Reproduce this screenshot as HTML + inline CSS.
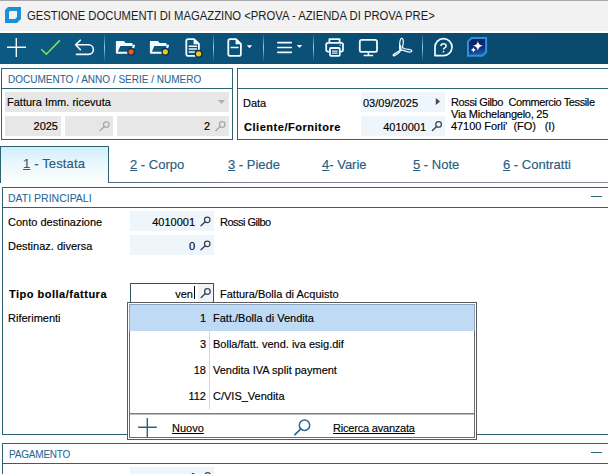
<!DOCTYPE html>
<html><head><meta charset="utf-8">
<style>
*{margin:0;padding:0;box-sizing:border-box}
html,body{width:608px;height:474px;overflow:hidden;background:#fff}
body{position:relative;font-family:"Liberation Sans",sans-serif;font-size:11px;color:#000;-webkit-text-stroke:0.15px currentColor}
.a{position:absolute}
.t{position:absolute;white-space:pre;line-height:11px;font-size:11px}
.r{text-align:right}
.bd{border:1px solid #2d6274}
.hd{color:#2a6590;font-size:10.5px;-webkit-text-stroke:0.05px currentColor}
.fg{background:#e7e7e7}
.fb{background:#eef5fb}
.tab{color:#275e81;font-size:13px;line-height:13px}
.u{text-decoration:underline;text-underline-offset:1px}
</style></head><body>
<!-- title bar -->
<div class="a" style="left:0;top:0;width:608px;height:1px;background:#a9a9a9"></div>
<div class="a" style="left:0;top:1px;width:608px;height:30px;background:#f2f2f2"></div>
<svg class="a" style="left:5px;top:7px" width="17" height="17" viewBox="0 0 17 17"><path d="M3 0H16V12L12 16H0V3Z" fill="#1a90d8"/><path d="M5 4H12V10L10 12H4V5Z" fill="#f2f2f2"/></svg>
<div class="t" style="left:27px;top:10px;font-size:12px;line-height:12px;color:#1c1c1c;-webkit-text-stroke:0;transform:scaleX(0.939);transform-origin:0 0">GESTIONE DOCUMENTI DI MAGAZZINO &lt;PROVA - AZIENDA DI PROVA PRE&gt;</div>

<!-- toolbar -->
<div class="a" style="left:0;top:33px;width:608px;height:31px;background:linear-gradient(90deg,#0c5a83,#0a4d72 60%,#094a6d)"></div>
<svg class="a" style="left:0;top:33px" width="608" height="31" viewBox="0 33 608 31">
<defs><linearGradient id="sep" x1="0" y1="0" x2="0" y2="1"><stop offset="0" stop-color="#8fd0ee" stop-opacity="0"/><stop offset=".5" stop-color="#8fd0ee"/><stop offset="1" stop-color="#8fd0ee" stop-opacity="0"/></linearGradient>
<linearGradient id="ai" x1="0.3" y1="0" x2="0.5" y2="1"><stop offset="0" stop-color="#0a1e5e"/><stop offset=".6" stop-color="#0d2d74"/><stop offset="1" stop-color="#1e64b4"/></linearGradient></defs>
<g fill="url(#sep)"><rect x="104" y="33.5" width="1" height="28"/><rect x="213" y="33.5" width="1" height="28"/><rect x="263" y="33.5" width="1" height="28"/><rect x="313" y="33.5" width="1" height="28"/><rect x="422" y="33.5" width="1" height="28"/></g>
<g fill="none" stroke="#f4fbff" stroke-width="1.4">
<path d="M7 47.3H26M16.3 38V57"/>
</g>
<path d="M41.3 49.3L46.3 54.2L59.8 40.4" fill="none" stroke="#84de5c" stroke-width="1.6"/>
<g fill="none" stroke="#f4fbff" stroke-width="1.6" stroke-linecap="round" stroke-linejoin="round">
<path d="M80.3 40.2L75.6 44.8L80.3 49.6M75.6 44.8H88.6A4.8 4.8 0 0 1 88.6 54.4H76.5"/>
</g>
<g fill="none" stroke="#f4fbff" stroke-width="1.8" stroke-linejoin="round">
<path d="M194 39.2H188.2Q186.3 39.2 186.3 41.1V53.9Q186.3 55.8 188.2 55.8H197Q198.9 55.8 198.9 53.9V44Z"/>
<path d="M236 39.2H230.2Q228.3 39.2 228.3 41.1V53.9Q228.3 55.8 230.2 55.8H239Q240.9 55.8 240.9 53.9V44Z"/>
</g>
<path d="M193.6 38.6L199.7 44.2H193.6Z M235.6 38.6L241.7 44.2H235.6Z" fill="#f4fbff"/>
<g fill="none" stroke="#eef9ff" stroke-width="1.5" stroke-linecap="round">
<path d="M189.3 46.3H196.5M189.3 49.1H196.5M189.3 52H194.5"/>
<path d="M231.2 47.5H238"/>
</g>
<g fill="none" stroke="#f4fbff" stroke-width="1.6" stroke-linecap="round">
<path d="M277.8 42.6H291.3M277.8 47.5H291.3M277.8 52.4H291.3"/>
</g>
<path d="M246.8 45.3H252.2L249.5 48.3Z M296.8 45.1H302.2L299.5 48.1Z" fill="#f4fbff"/>
<path d="M115.9 41.8Q115.9 41 116.7 41H123.9L125.6 42.9H132.4V44.7H134.4Q135.4 44.8 135 45.8L131.8 53.8H116.7Q115.9 53.8 115.9 53ZM120.3 45.9H132.8L130.2 51.8H117.9Z" fill="#f4fbff" fill-rule="evenodd"/><path d="M115.9 41.8Q115.9 41 116.7 41H123.9L125.6 42.9H132.4V44.7H134.4Q135.4 44.8 135 45.8L131.8 53.8H116.7Q115.9 53.8 115.9 53ZM120.3 45.9H132.8L130.2 51.8H117.9Z" transform="translate(34 0)" fill="#f4fbff" fill-rule="evenodd"/>
<circle cx="131.1" cy="51.8" r="4" fill="#07354f"/><circle cx="131.1" cy="51.8" r="2.6" fill="#f0581c"/>
<circle cx="165.3" cy="51.8" r="4" fill="#07354f"/><circle cx="165.3" cy="51.8" r="2.6" fill="#f4c71a"/>
<circle cx="198.6" cy="53.8" r="4" fill="#07354f"/><circle cx="198.6" cy="53.8" r="2.6" fill="#f4c71a"/>
<g fill="none" stroke="#eef9ff" stroke-width="1.8" stroke-linejoin="round">
<path d="M329.4 42.3V39.2H339.6V42.3"/>
<path d="M329.2 51.6H328Q326.2 51.6 326.2 49.8V44.6Q326.2 42.8 328 42.8H341.2Q343 42.8 343 44.6V49.8Q343 51.6 341.2 51.6H340"/>
<rect x="330" y="48" width="9.8" height="7.8" rx="1"/>
<rect x="359.8" y="39.9" width="17.2" height="12" rx="2"/>
</g>
<g fill="none" stroke="#d9f2ff" stroke-width="1.2"><path d="M332 51.1H337.6M332 53.2H337.6"/></g>
<rect x="339.4" y="44.6" width="1.6" height="1.2" fill="#9fd8f2"/>
<path d="M368.4 52.2V55M363.6 55.4H373.2" fill="none" stroke="#eef9ff" stroke-width="1.5"/>
<path d="M399.9 50.6C399.2 46.5 399.6 38.4 401.7 38.4C403.7 38.4 403.8 43.5 402.5 46.6C401.9 48.3 405.2 49 408.6 49.3C411.2 49.6 412.4 50.8 411.5 51.6C410.6 52.4 406.8 51.9 403.4 50.4C400.4 49.1 396.7 52.4 394.3 53.9C392.6 55 392.9 56.3 394.4 55.7C396.6 54.8 399.6 52.6 400.9 49.8C401.5 48.5 400.8 47.2 400.4 45.5" fill="none" stroke="#eef9ff" stroke-width="1.25" stroke-linejoin="round" stroke-linecap="round"/>
<path d="M435 55.6V47.1A8.5 8.5 0 1 1 443.5 55.6Z" fill="none" stroke="#f4fbff" stroke-width="1.7" stroke-linejoin="round"/>
<path d="M440.9 46.1Q440.9 43.8 443.5 43.8Q446.1 43.8 446.1 45.9Q446.1 47.3 444.6 47.9Q443.5 48.4 443.5 49.6" fill="none" stroke="#f4fbff" stroke-width="1.5"/>
<circle cx="443.5" cy="51.6" r="0.95" fill="#f4fbff"/>
<path d="M471.6 38H486.1V52.2L482.3 55.8H468V41.6Z" fill="url(#ai)" stroke="#2a92de" stroke-width="2"/>
<path d="M477.9 40.9Q478.5 45.2 483.1 45.8Q478.5 46.4 477.9 50.7Q477.3 46.4 472.7 45.8Q477.3 45.2 477.9 40.9Z" fill="#fff"/>
<path d="M473.4 47.3Q473.8 49.5 476 49.9Q473.8 50.3 473.4 52.5Q473 50.3 470.8 49.9Q473 49.5 473.4 47.3Z" fill="#fff"/>
</svg>

<!-- panel documento -->
<div class="a bd" style="left:1px;top:68px;width:232px;height:72px"></div>
<div class="a" style="left:1px;top:88px;width:232px;height:1px;background:#2d6274"></div>
<div class="t hd" style="left:8px;top:74px;font-size:10px">DOCUMENTO / ANNO / SERIE / NUMERO</div>
<div class="a fg" style="left:5px;top:92px;width:224px;height:20px"></div>
<div class="t" style="left:7px;top:97px">Fattura Imm. ricevuta</div>
<div class="a fg" style="left:5px;top:116px;width:56px;height:20px"></div>
<div class="t r" style="left:5px;top:121px;width:53px">2025</div>
<div class="a fg" style="left:65px;top:116px;width:48px;height:20px"></div>
<div class="a fg" style="left:117px;top:116px;width:112px;height:20px"></div>
<div class="t r" style="left:117px;top:121px;width:93px">2</div>

<!-- panel cliente -->
<div class="a bd" style="left:237px;top:68px;width:380px;height:72px"></div>
<div class="a" style="left:237px;top:88px;width:371px;height:1px;background:#2d6274"></div>
<div class="t" style="left:243px;top:98px">Data</div>
<div class="t" style="left:244px;top:122px;font-weight:bold;letter-spacing:0.53px">Cliente/Fornitore</div>
<div class="a fb" style="left:361px;top:92px;width:84px;height:20px"></div>
<div class="t" style="left:363px;top:98px">03/09/2025</div>
<div class="a fb" style="left:361px;top:116px;width:84px;height:20px"></div>
<div class="t r" style="left:361px;top:122px;width:65px">4010001</div>
<div class="t" style="left:451px;top:97px;letter-spacing:-0.38px">Rossi Gilbo  Commercio Tessile</div>
<div class="t" style="left:451px;top:109px;letter-spacing:-0.24px">Via Michelangelo, 25</div>
<div class="t" style="left:451px;top:121px;letter-spacing:-0.06px">47100 Forli'  (FO)   (I)</div>

<!-- tabs -->
<div class="a" style="left:0;top:146px;width:109px;height:37px;border:1px solid #2d6274;border-bottom:none;background:linear-gradient(#d0eefa,#ecf8fc 50%,#fdfeff)"></div>
<div class="a" style="left:108px;top:182px;width:500px;height:1px;background:linear-gradient(90deg,#56667a,#7d8494 30%,#8a8e9a)"></div>
<div class="t tab" style="left:23px;top:157px;letter-spacing:0.15px"><span class="u">1</span> - Testata</div>
<div class="t tab" style="left:130px;top:158px"><span class="u">2</span> - Corpo</div>
<div class="t tab" style="left:228px;top:158px"><span class="u">3</span> - Piede</div>
<div class="t tab" style="left:322px;top:158px"><span class="u">4</span>- Varie</div>
<div class="t tab" style="left:413px;top:158px"><span class="u">5</span> - Note</div>
<div class="t tab" style="left:503px;top:158px"><span class="u">6</span> - Contratti</div>

<!-- dati principali -->
<div class="a bd" style="left:2px;top:187px;width:620px;height:248px"></div>
<div class="a" style="left:2px;top:207px;width:606px;height:1px;background:#2d6274"></div>
<div class="t hd" style="left:8px;top:193px">DATI PRINCIPALI</div>
<div class="a" style="left:591px;top:196px;width:11px;height:1px;background:#2d6274"></div>
<div class="t" style="left:8px;top:217px">Conto destinazione</div>
<div class="a fb" style="left:130px;top:211px;width:84px;height:20px"></div>
<div class="t r" style="left:130px;top:217px;width:65px">4010001</div>
<div class="t" style="left:220px;top:217px;letter-spacing:-0.5px">Rossi Gilbo</div>
<div class="t" style="left:8px;top:241px">Destinaz. diversa</div>
<div class="a fb" style="left:130px;top:235px;width:84px;height:20px"></div>
<div class="t r" style="left:130px;top:241px;width:65px">0</div>
<div class="t" style="left:9px;top:289px;font-weight:bold;letter-spacing:0.5px">Tipo bolla/fattura</div>
<div class="a" style="left:130px;top:283px;width:84px;height:20px;border:1px solid #2a5262;background:#fff"></div>
<div class="t r" style="left:130px;top:289px;width:63px">ven</div>
<div class="t" style="left:220px;top:289px">Fattura/Bolla di Acquisto</div>
<div class="t" style="left:8px;top:313px">Riferimenti</div>

<!-- pagamento -->
<div class="a bd" style="left:2px;top:443px;width:620px;height:60px"></div>
<div class="a" style="left:2px;top:463px;width:606px;height:1px;background:#2d6274"></div>
<div class="t hd" style="left:9px;top:449px;font-size:10px;letter-spacing:-0.2px">PAGAMENTO</div>
<div class="a" style="left:591px;top:452px;width:11px;height:1px;background:#2d6274"></div>
<div class="a fb" style="left:130px;top:467px;width:84px;height:20px"></div>
<div class="t r" style="left:130px;top:472px;width:66px">1</div>

<svg class="a" style="left:0;top:0" width="608" height="474"><path d="M217.9 100.1H225L221.45 104Z" fill="#a9aeb8"/><circle cx="106.3" cy="124.55" r="2.8" fill="none" stroke="#a4a8ae" stroke-width="1.25"/><path d="M104.32 126.53L100.10 130.55" stroke="#a4a8ae" stroke-width="1.4" stroke-linecap="round"/><circle cx="222.2" cy="124.5" r="2.8" fill="none" stroke="#a4a8ae" stroke-width="1.25"/><path d="M220.22 126.48L216.00 130.50" stroke="#a4a8ae" stroke-width="1.4" stroke-linecap="round"/><path d="M435.8 97.9V104.9L440 101.4Z" fill="#3d4858"/><circle cx="438.6" cy="124.45" r="2.8" fill="none" stroke="#3c4450" stroke-width="1.25"/><path d="M436.62 126.43L432.40 130.45" stroke="#3c4450" stroke-width="1.4" stroke-linecap="round"/><circle cx="207.2" cy="219.8" r="2.8" fill="none" stroke="#3c4450" stroke-width="1.25"/><path d="M205.22 221.78L201.00 225.80" stroke="#3c4450" stroke-width="1.4" stroke-linecap="round"/><circle cx="207.2" cy="243.8" r="2.8" fill="none" stroke="#3c4450" stroke-width="1.25"/><path d="M205.22 245.78L201.00 249.80" stroke="#3c4450" stroke-width="1.4" stroke-linecap="round"/><rect x="198" y="284" width="15" height="18" fill="#eef5fb"/><circle cx="207.4" cy="291.5" r="2.8" fill="none" stroke="#3c4450" stroke-width="1.25"/><path d="M205.42 293.48L201.20 297.50" stroke="#3c4450" stroke-width="1.4" stroke-linecap="round"/><rect x="194" y="286" width="1" height="13" fill="#000"/><circle cx="207.7" cy="475.5" r="2.8" fill="none" stroke="#3c4450" stroke-width="1.25"/><path d="M205.72 477.48L201.50 481.50" stroke="#3c4450" stroke-width="1.4" stroke-linecap="round"/></svg>
<!-- popup -->
<div class="a" style="left:127px;top:302px;width:350px;height:138px;border:1px solid #5a5a5a;background:#fff"></div>
<div class="a" style="left:129px;top:304px;width:346px;height:134px;border:1px solid #6c6c6c"></div>
<div class="a" style="left:129px;top:304px;width:346px;height:27px;background:#bedaf5;border:1px solid #8ca4c0;border-bottom:none"></div>
<div class="a" style="left:209px;top:305px;width:1px;height:104px;background:#d6d6d6"></div>
<div class="t r" style="left:130px;top:313px;width:76px">1</div>
<div class="t" style="left:213px;top:313px">Fatt./Bolla di Vendita</div>
<div class="t r" style="left:130px;top:339px;width:76px">3</div>
<div class="t" style="left:213px;top:339px">Bolla/fatt. vend. iva esig.dif</div>
<div class="t r" style="left:130px;top:365px;width:76px">18</div>
<div class="t" style="left:213px;top:365px">Vendita IVA split payment</div>
<div class="t r" style="left:130px;top:391px;width:76px">112</div>
<div class="t" style="left:213px;top:391px">C/VIS_Vendita</div>
<div class="a" style="left:130px;top:413px;width:344px;height:1px;background:#7c8088"></div><div class="a" style="left:130px;top:414px;width:344px;height:1px;background:#b8bcc4"></div>
<div class="t u" style="left:172px;top:423px">Nuovo</div>
<div class="t u" style="left:333px;top:423px;letter-spacing:-0.2px">Ricerca avanzata</div>
<svg class="a" style="left:0;top:0" width="608" height="474"><path d="M138.1 427.3H156.8M147.3 418.1V437" stroke="#2a6482" stroke-width="1.4"/><circle cx="304.5" cy="425.2" r="5.2" fill="none" stroke="#2a6a8c" stroke-width="1.5"/><path d="M300.8 428.9L294.9 434.6" stroke="#2a6a8c" stroke-width="1.7" stroke-linecap="round"/></svg>
</body></html>
